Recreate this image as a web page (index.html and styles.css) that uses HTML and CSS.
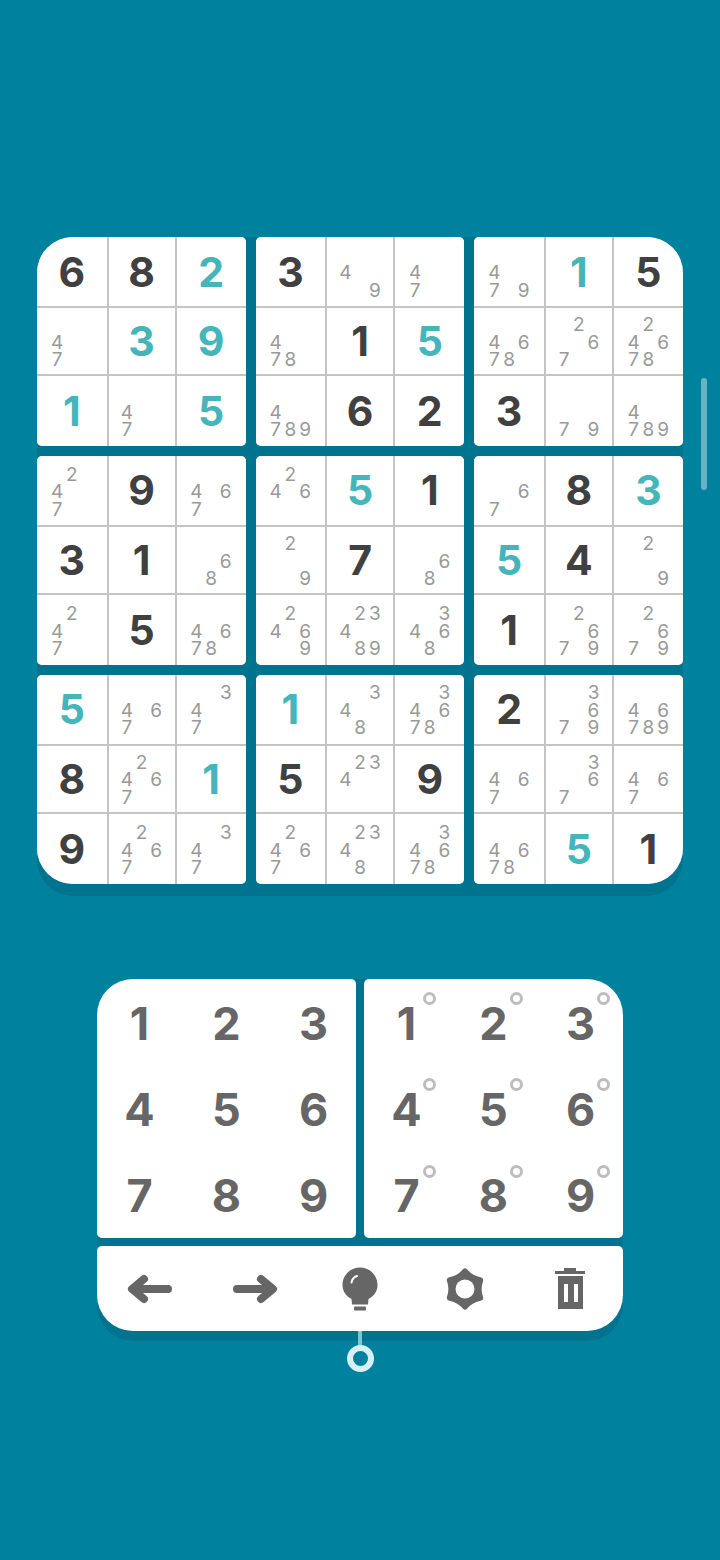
FILE: index.html
```html
<!DOCTYPE html>
<html lang="en">
<head>
    <meta charset="UTF-8">
    <meta name="viewport" content="width=device-width, initial-scale=1.0">
    <title>Sudoku</title>
    <link rel="stylesheet" href="styles.css">
</head>
<body>
    <div class="scrollbar"></div>
    <div class="board"></div>

    <div class="controls">
        <div class="pads">
            <div class="pad pad-digits"></div>
            <div class="pad pad-notes"></div>
        </div>
        <div class="toolbar">
            <button class="tool">
                <svg width="50" height="36" viewBox="0 0 50 36">
                    <path class="arrow" d="M43 18H9M19 8L7 18L19 28"/>
                </svg>
            </button>
            <button class="tool">
                <svg width="50" height="36" viewBox="0 0 50 36">
                    <path class="arrow" d="M7 18H41M31 8L43 18L31 28"/>
                </svg>
            </button>
            <button class="tool">
                <svg width="36" height="44" viewBox="0 0 36 44">
                    <path class="solid" d="M18 0.5C27.7 0.5 35.5 8.3 35.5 18C35.5 24.5 32 29 26.5 32L26 37.5H10L9.500 32C4 29 0.500 24.500 0.500 18C0.500 8.300 8.300 0.500 18 0.500Z"/>
                    <rect class="solid" x="12" y="39.500" width="12" height="4" rx="1"/>
                    <path class="shine" d="M9.500 15.500C10 12.500 12 10 15 9"/>
                </svg>
            </button>
            <button class="tool">
                <svg width="42" height="44" viewBox="-21 -22 42 44">
                    <path class="gear" d="M0 -17.500Q6 -10.500 15.200 -8.800Q12 0 15.200 8.800Q6 10.500 0 17.500Q-6 10.500 -15.200 8.800Q-12 0 -15.200 -8.800Q-6 -10.500 0 -17.500Z"/>
                    <circle class="hole" r="9.500"/>
                </svg>
            </button>
            <button class="tool">
                <svg width="30" height="42" viewBox="0 0 30 42">
                    <path class="solid" d="M9 0H21V3H30V6H0V3H9ZM3 8H28V41H3ZM9 16V34H13V16ZM19 16V34H23V16Z" fill-rule="evenodd"/>
                </svg>
            </button>
        </div>
        <div class="pin">
            <div class="pin-line"></div>
            <div class="pin-ring"></div>
        </div>
    </div>

    <script>
    // g = given, t = teal (placed), p = pencil marks
    const boxes = [
        ["g6", "g8", "t2", "p47", "t3", "t9", "t1", "p47", "t5"],
        ["g3", "p49", "p47", "p478", "g1", "t5", "p4789", "g6", "g2"],
        ["p479", "t1", "g5", "p4678", "p267", "p24678", "g3", "p79", "p4789"],
        ["p247", "g9", "p467", "g3", "g1", "p68", "p247", "g5", "p4678"],
        ["p246", "t5", "g1", "p29", "g7", "p68", "p2469", "p23489", "p3468"],
        ["p67", "g8", "t3", "t5", "g4", "p29", "g1", "p2679", "p2679"],
        ["t5", "p467", "p347", "g8", "p2467", "t1", "g9", "p2467", "p347"],
        ["t1", "p348", "p34678", "g5", "p234", "g9", "p2467", "p2348", "p34678"],
        ["g2", "p3679", "p46789", "p467", "p367", "p467", "p4678", "t5", "g1"]
    ];

    const board = document.querySelector(".board");

    boxes.forEach((cells) => {
        const box = document.createElement("div");
        box.classList.add("box");

        cells.forEach((value) => {
            const cell = document.createElement("div");
            const kind = value[0];
            const digits = value.slice(1);
            cell.classList.add("cell");

            if (kind === "p") {
                const marks = document.createElement("div");
                marks.classList.add("marks");
                for (let n = 1; n <= 9; n++) {
                    const mark = document.createElement("span");
                    mark.textContent = digits.includes(String(n)) ? n : "";
                    marks.appendChild(mark);
                }
                cell.appendChild(marks);
            } else {
                cell.classList.add(kind === "t" ? "teal" : "given");
                cell.textContent = digits;
            }
            box.appendChild(cell);
        });
        board.appendChild(box);
    });

    document.querySelectorAll(".pad").forEach((pad) => {
        for (let n = 1; n <= 9; n++) {
            const key = document.createElement("div");
            key.classList.add("key");
            key.textContent = n;
            pad.appendChild(key);
        }
    });
    </script>
</body>
</html>
```

FILE: styles.css
```css
body {
    margin: 0;
    height: 1560px;
    overflow: hidden;
    position: relative;
    display: flex;
    flex-direction: column;
    align-items: center;
    background-color: #00829f;
    font-family: "Inter", "Noto Sans", sans-serif;
}

.scrollbar {
    position: absolute;
    top: 378px;
    right: 13px;
    width: 6px;
    height: 112px;
    border-radius: 3px;
    background-color: rgba(255, 255, 255, 0.4);
}

.board {
    display: grid;
    grid-template-columns: repeat(3, 1fr);
    grid-template-rows: repeat(3, 1fr);
    gap: 9.5px 10px;
    width: 646px;
    height: 647px;
    margin-top: 237px;
    border-radius: 36px;
    background-color: #00748e;
    box-shadow: 0 12px 0 #00748e;
}

.box {
    display: grid;
    grid-template-columns: 69.5px 66px 1fr;
    grid-template-rows: 69px 66px 1fr;
    gap: 2px;
    border-radius: 5px;
    overflow: hidden;
    background-color: #c4c4c4;
}

.box:nth-child(1) { border-top-left-radius: 36px; }
.box:nth-child(3) { border-top-right-radius: 36px; }
.box:nth-child(7) { border-bottom-left-radius: 36px; }
.box:nth-child(9) { border-bottom-right-radius: 36px; }

.cell {
    display: flex;
    justify-content: center;
    align-items: center;
    background-color: #fff;
    font-size: 41px;
    font-weight: 700;
}

.given {
    color: #404040;
}

.teal {
    color: #45b5ba;
}

.marks {
    display: grid;
    grid-template-columns: repeat(3, 14.7px);
    grid-template-rows: repeat(3, 17.5px);
    padding-top: 3px;
    color: #999;
    font-size: 19px;
    font-weight: 400;
    line-height: 17.5px;
    text-align: center;
}

.controls {
    display: flex;
    flex-direction: column;
    width: 526px;
    margin-top: 95px;
}

.pads {
    display: grid;
    grid-template-columns: minmax(0, 1fr) minmax(0, 1fr);
    gap: 8px;
    border-radius: 36px 36px 0 0;
    background-color: #00748e;
    padding-bottom: 8px;
}

.pad {
    display: grid;
    grid-template-columns: repeat(3, 87px);
    grid-template-rows: repeat(3, 1fr);
    justify-content: center;
    height: 259px;
    background-color: #fff;
    border-radius: 5px;
}

.pad-digits { border-top-left-radius: 36px; }
.pad-notes { border-top-right-radius: 36px; }

.key {
    position: relative;
    display: flex;
    justify-content: center;
    align-items: center;
    padding-top: 2px;
    color: #666;
    font-size: 45px;
    font-weight: 700;
}

.pad-notes .key::after {
    content: "";
    position: absolute;
    top: 13px;
    left: 60px;
    width: 7px;
    height: 7px;
    border: 3px solid #bdbdbd;
    border-radius: 50%;
}

.toolbar {
    display: grid;
    grid-template-columns: repeat(5, 1fr);
    height: 85px;
    background-color: #fff;
    border-radius: 5px 5px 36px 36px;
    box-shadow: 0 10px 0 #00748e;
}

.tool {
    display: flex;
    justify-content: center;
    align-items: center;
    padding: 0;
    border: 0;
    background: none;
}

.arrow {
    fill: none;
    stroke: #666;
    stroke-width: 8;
    stroke-linecap: round;
    stroke-linejoin: round;
}

.solid {
    fill: #666;
}

.shine {
    fill: none;
    stroke: #fff;
    stroke-width: 2;
    stroke-linecap: round;
}

.gear {
    fill: #666;
    stroke: #666;
    stroke-width: 6;
    stroke-linejoin: round;
}

.hole {
    fill: #fff;
}

.pin {
    display: flex;
    flex-direction: column;
    align-items: center;
}

.pin-line {
    width: 4px;
    height: 14px;
    background-color: #7fc6d4;
}

.pin-ring {
    width: 15px;
    height: 15px;
    border: 6px solid #d9f1f5;
    border-radius: 50%;
}
```
